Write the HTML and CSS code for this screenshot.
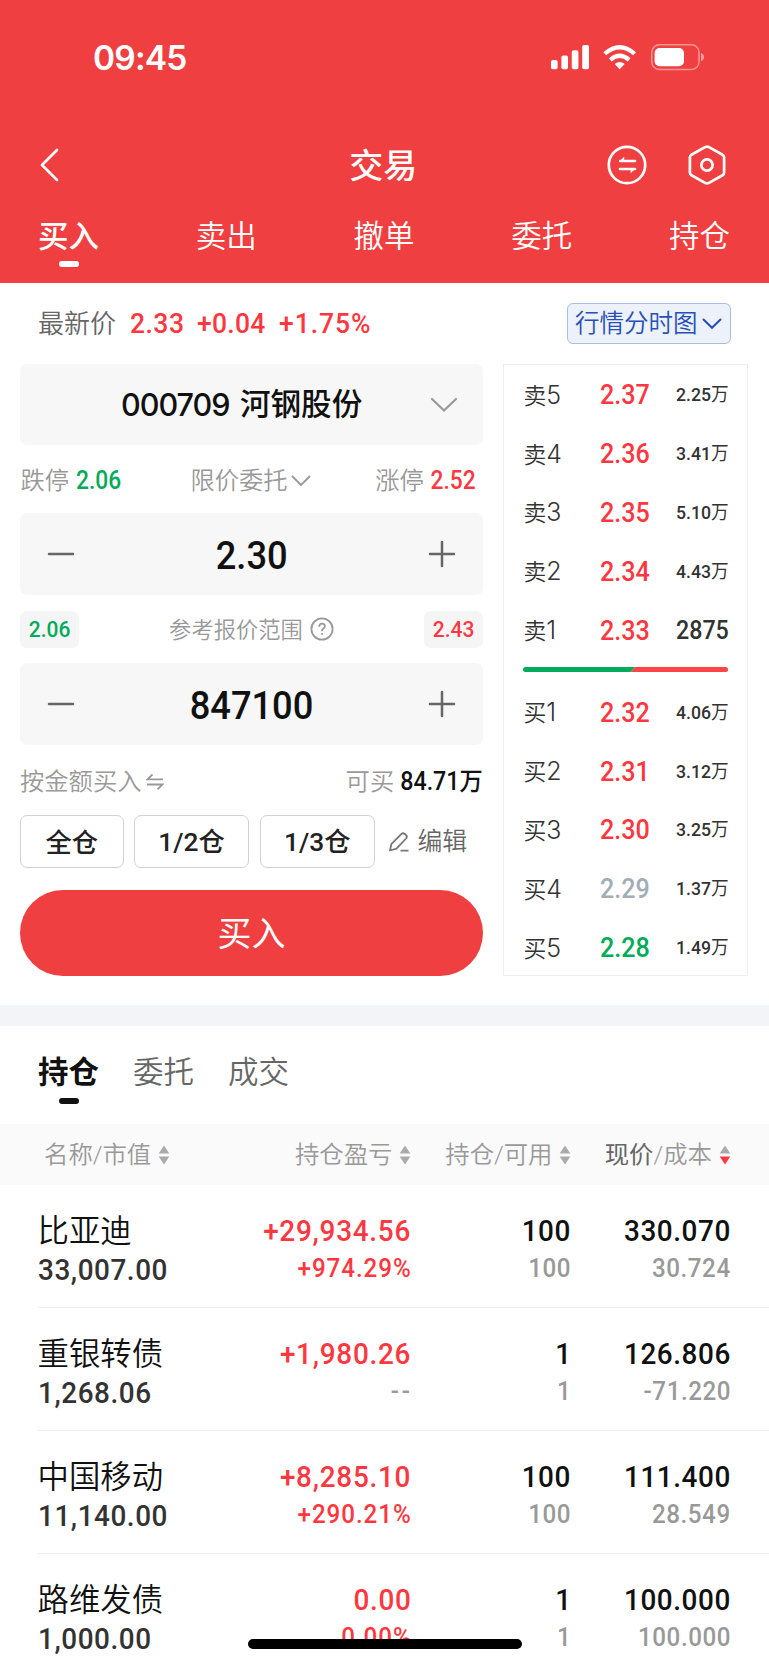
FILE: index.html
```html
<!DOCTYPE html>
<html lang="zh-CN">
<head>
<meta charset="utf-8">
<title>交易</title>
<link rel="stylesheet" href="styles.css">
</head>
<body>
<svg class="defs" width="0" height="0">
  <symbol id="sort" viewBox="0 0 12 20"><path class="up" d="M6 .6 11.300 8.600H.7Z"/><path class="down" d="M6 19.600 .7 11.600h10.600Z"/></symbol>
  <symbol id="minus" viewBox="0 0 28 28"><path d="M2 14h24"/></symbol>
  <symbol id="plus" viewBox="0 0 28 28"><path d="M2 14h24M14 2v24"/></symbol>
</svg>
<div class="screen">
  <header class="header">
    <div class="status">
      <span class="clock">09:45</span>
      <svg class="status-icons" width="156" height="30" viewBox="549 42 156 30">
        <g fill="#fff">
          <rect x="551" y="60" width="6.6" height="9.3" rx="1.8"/>
          <rect x="561.4" y="55.5" width="6.6" height="13.8" rx="1.8"/>
          <rect x="571.8" y="50.2" width="6.6" height="19.1" rx="1.8"/>
          <rect x="582.2" y="45" width="6.8" height="24.3" rx="1.8"/>
          <path d="M619.7 69.3l-5-5.2q5-4.2 10 0z"/>
        </g>
        <g fill="none" stroke="#fff" stroke-width="4.2">
          <path d="M604.8 53.8q14.9-13.2 29.8 0"/>
          <path d="M610.3 59.8q9.4-8 18.8 0"/>
        </g>
        <rect x="651.8" y="44.8" width="47.2" height="24.6" rx="7.5" fill="none" stroke="#fff" stroke-opacity=".45" stroke-width="1.5"/>
        <rect x="654.6" y="48" width="29.4" height="18.2" rx="5" fill="#fff"/>
        <path d="M701 53v8.2q3-1 3-4.1t-3-4.1z" fill="#fff" fill-opacity=".5"/>
      </svg>
    </div>
    <div class="navbar">
      <svg class="back" width="20" height="34" viewBox="0 0 20 34"><path d="M18 2 3 17l15 15"/></svg>
      <h1 class="title">交易</h1>
      <div class="nav-actions">
        <svg width="42" height="42" viewBox="0 0 42 42"><circle cx="21" cy="21" r="18.2"/><path d="M14.3 17H29M14 25h15"/><path class="solid" d="M13.2 17.6 18.2 12.8v4.8zM29.6 24.4l-5 4.8v-4.8z"/></svg>
        <svg width="42" height="42" viewBox="0 0 42 42"><path d="M19 3.1q2-1.100 4 0L36.500 10.700q1.600 1 1.600 2.800v15q0 1.800-1.600 2.800L23 38.900q-2 1.100-4 0L5.500 31.300q-1.600-1-1.600-2.800v-15q0-1.800 1.600-2.800z"/><circle cx="21" cy="21" r="5.600"/></svg>
      </div>
    </div>
    <nav class="tabs">
      <span class="tab active">买入</span><span class="tab">卖出</span><span class="tab">撤单</span><span class="tab">委托</span><span class="tab">持仓</span>
    </nav>
  </header>

  <section class="quote">
    <span class="quote-label">最新价</span>
    <span class="num q1">2.33</span><span class="num q2">+0.04</span><span class="num q3">+1.75%</span>
    <span class="chart-btn">行情分时图<svg width="20" height="12" viewBox="0 0 20 12"><path d="M1.500 1.500 10 9.800l8.500-8.300"/></svg></span>
  </section>

  <main class="trade">
    <div class="form">
      <div class="field stock"><span class="code">000709</span><span class="name">河钢股份</span><svg class="chev" width="28" height="16" viewBox="0 0 28 16"><path d="M2 2l12 11.500L26 2"/></svg></div>
      <div class="line limits">
        <span class="limit"><span class="muted">跌停</span><span class="num green">2.06</span></span>
        <span class="muted order-type">限价委托<svg width="20" height="12" viewBox="0 0 20 12"><path d="M1.500 1.500 10 10l8.500-8.500"/></svg></span>
        <span class="limit up-limit"><span class="muted">涨停</span><span class="num red">2.52</span></span>
      </div>
      <div class="field stepper"><svg width="28" height="28"><use href="#minus"/></svg><span class="num price-value">2.30</span><svg width="28" height="28"><use href="#plus"/></svg></div>
      <div class="line range">
        <span class="chip"><span class="num green">2.06</span></span>
        <span class="range-label">参考报价范围<svg width="24" height="24" viewBox="0 0 24 24"><circle cx="12" cy="12" r="10.600"/><path d="M9.200 9.700q.2-3 2.900-3 2.700 0 2.700 2.500 0 1.300-1.300 2.300-1.400 1-1.400 2.300v.5M12.100 16v1.700"/></svg></span>
        <span class="chip"><span class="num red">2.43</span></span>
      </div>
      <div class="field stepper"><svg width="28" height="28"><use href="#minus"/></svg><span class="num qty-value">847100</span><svg width="28" height="28"><use href="#plus"/></svg></div>
      <div class="line amount">
        <span class="muted by-amount">按金额买入<svg width="18" height="18" viewBox="0 0 18 18"><path d="M6.500 1.500 1.500 6.300h15.500M1 11.500h15.500l-5 4.800"/></svg></span>
        <span class="available"><span class="muted">可买</span><span class="num max">84.71<span class="wan">万</span></span></span>
      </div>
      <div class="fractions">
        <span class="frac full">全仓</span><span class="frac">1/2仓</span><span class="frac">1/3仓</span>
        <span class="edit"><svg width="20" height="20" viewBox="0 0 20 20"><path d="M1 18.500l1.300-6.300L12.500 1.900q1.500-1.300 3.300 0l1.300 1.300q1.500 1.500 0 3.300L7.500 16.700zM11.500 18.700h8"/></svg>编辑</span>
      </div>
      <div class="buy">买入</div>
    </div>
    <div class="book">
      <div class="level"><span class="side">卖<i>5</i></span><span class="num p red">2.37</span><span class="num v">2.25<b>万</b></span></div>
      <div class="level"><span class="side">卖<i>4</i></span><span class="num p red">2.36</span><span class="num v">3.41<b>万</b></span></div>
      <div class="level"><span class="side">卖<i>3</i></span><span class="num p red">2.35</span><span class="num v">5.10<b>万</b></span></div>
      <div class="level"><span class="side">卖<i>2</i></span><span class="num p red">2.34</span><span class="num v">4.43<b>万</b></span></div>
      <div class="level"><span class="side">卖<i>1</i></span><span class="num p red">2.33</span><span class="num v big">2875</span></div>
      <svg class="ratio" width="205" height="5" viewBox="0 0 205 5"><path d="M2.500 0H112l-4 5H2.500a2.500 2.500 0 0 1 0-5z" fill="#00ab59"/><path d="M112 0h90.500a2.500 2.500 0 0 1 0 5H108z" fill="#ff4549"/></svg>
      <div class="level"><span class="side">买<i>1</i></span><span class="num p red">2.32</span><span class="num v">4.06<b>万</b></span></div>
      <div class="level"><span class="side">买<i>2</i></span><span class="num p red">2.31</span><span class="num v">3.12<b>万</b></span></div>
      <div class="level"><span class="side">买<i>3</i></span><span class="num p red">2.30</span><span class="num v">3.25<b>万</b></span></div>
      <div class="level"><span class="side">买<i>4</i></span><span class="num p flat">2.29</span><span class="num v">1.37<b>万</b></span></div>
      <div class="level"><span class="side">买<i>5</i></span><span class="num p green">2.28</span><span class="num v">1.49<b>万</b></span></div>
    </div>
  </main>

  <section class="holdings">
    <nav class="subtabs"><span class="subtab active">持仓</span><span class="subtab">委托</span><span class="subtab">成交</span></nav>
    <div class="row head">
      <span class="c1">名称/市值<svg width="12" height="20"><use href="#sort"/></svg></span>
      <span class="c2">持仓盈亏<svg width="12" height="20"><use href="#sort"/></svg></span>
      <span class="c3">持仓/可用<svg width="12" height="20"><use href="#sort"/></svg></span>
      <span class="c4"><em>现价</em>/成本<svg class="desc" width="12" height="20"><use href="#sort"/></svg></span>
    </div>
    <div class="row item">
      <div class="c1"><span class="sec">比亚迪</span><span class="num val">33,007.00</span></div>
      <div class="c2 red"><span class="num main">+29,934.56</span><span class="num sub">+974.29%</span></div>
      <div class="c3"><span class="num main">100</span><span class="num sub">100</span></div>
      <div class="c4"><span class="num main">330.070</span><span class="num sub">30.724</span></div>
    </div>
    <div class="row item">
      <div class="c1"><span class="sec">重银转债</span><span class="num val">1,268.06</span></div>
      <div class="c2 red"><span class="num main">+1,980.26</span><span class="num sub none">--</span></div>
      <div class="c3"><span class="num main">1</span><span class="num sub">1</span></div>
      <div class="c4"><span class="num main">126.806</span><span class="num sub">-71.220</span></div>
    </div>
    <div class="row item">
      <div class="c1"><span class="sec">中国移动</span><span class="num val">11,140.00</span></div>
      <div class="c2 red"><span class="num main">+8,285.10</span><span class="num sub">+290.21%</span></div>
      <div class="c3"><span class="num main">100</span><span class="num sub">100</span></div>
      <div class="c4"><span class="num main">111.400</span><span class="num sub">28.549</span></div>
    </div>
    <div class="row item">
      <div class="c1"><span class="sec">路维发债</span><span class="num val">1,000.00</span></div>
      <div class="c2 red"><span class="num main">0.00</span><span class="num sub">0.00%</span></div>
      <div class="c3"><span class="num main">1</span><span class="num sub">1</span></div>
      <div class="c4"><span class="num main">100.000</span><span class="num sub">100.000</span></div>
    </div>
  </section>
  <div class="home-bar"></div>
</div>
</body>
</html>
```
FILE: styles.css
```css
* { box-sizing: border-box; }
body { margin: 0; background: #fff; font-family: Roboto, "Noto Sans CJK SC", sans-serif; color: #111; font-weight: 350; }
span, h1, svg { flex: none; }
svg { display: block; }
.defs { position: absolute; }
.screen { position: relative; width: 769px; height: 1665px; overflow: hidden; }
/* condensed figures */
.num { display: inline-block; font-weight: 500; transform: scaleX(.93); transform-origin: 0 50%; }
.red { color: #ff3740; }
.green { color: #00ab59; }
.flat { color: #a3adb8; }

/* header */
.header { height: 283px; background: #f03f41; color: #fff; }
.status { height: 114px; padding: 1px 64px 0 93px; display: flex; align-items: center; justify-content: space-between; }
.status-icons { margin-top: -1px; }
.clock { font: 600 33.500px/40px Inter, sans-serif; letter-spacing: -.8px; }
.navbar { height: 101px; padding: 0 41px 0 38.500px; display: grid; grid-template-columns: 1fr auto 1fr; align-items: center; }
.back { fill: none; stroke: #fff; stroke-width: 2.700; stroke-linecap: round; stroke-linejoin: round; }
.title { margin: 0; padding-top: 2px; font-size: 34px; line-height: 44px; font-weight: 500; }
.nav-actions { display: flex; justify-content: flex-end; gap: 38px; }
.nav-actions svg { fill: none; stroke: #fff; stroke-width: 2.700; stroke-linecap: round; }
.nav-actions .solid { fill: #fff; stroke: none; }
.tabs { height: 68px; padding: 0 39px 0 38px; display: flex; justify-content: space-between; font-size: 30.500px; line-height: 44px; }
.tab.active { font-weight: 500; }
.tab.active::after, .subtab.active::after { content: ""; display: block; width: 20px; height: 6px; margin: 2px auto 0; border-radius: 3px; background: currentColor; }

/* quote line */
.quote { height: 81px; padding: 0 38px; display: flex; align-items: center; font-size: 28.500px; color: #ff3740; line-height: 40px; }
.quote-label { font-size: 26px; color: #666; width: 91.500px; padding-top: 1px; }
.q1 { width: 67px; letter-spacing: .5px; }
.q2 { width: 82px; letter-spacing: .3px; }
.q3 { letter-spacing: 1px; }
.chart-btn { margin-left: auto; width: 164px; height: 41px; padding: 1px 8px 0 7px; display: flex; align-items: center; justify-content: space-between; border: 1px solid #a9bde8; border-radius: 6px; background: #edf1fa; color: #2550b8; font-size: 24.500px; }
.chart-btn svg { fill: none; stroke: #2550b8; stroke-width: 2; stroke-linecap: round; }

/* order form */
.trade { height: 641px; padding: 0 21.500px 0 20px; display: flex; justify-content: space-between; align-items: flex-start; }
.form { width: 463px; }
.field { height: 81px; border-radius: 7px; background: #f7f7f7; display: flex; align-items: center; }
.stock { padding: 0 25px 0 101px; font-weight: 500; font-size: 30.600px; line-height: 40px; }
.code { font-family: Inter, sans-serif; letter-spacing: -1.050px; }
.name { margin-left: 10.500px; padding-top: 1px; }
.chev { margin-left: auto; fill: none; stroke: #999; stroke-width: 2.200; stroke-linecap: round; }
.line { height: 68px; padding-top: 4px; display: flex; align-items: center; font-size: 24.300px; line-height: 36px; }
.muted { color: #999; }
.line .num { font-size: 25px; transform: scaleX(.91); }
.limit, .available { display: flex; gap: 7px; }
.line.limits { padding: 4px 7px 0 .5px; justify-content: space-between; }
.line .up-limit .num { margin-left: -4.500px; transform-origin: 100% 50%; }
.order-type { display: flex; align-items: center; }
.order-type svg { margin-left: 3px; fill: none; stroke: #999; stroke-width: 1.800; stroke-linecap: round; }
.stepper { height: 82px; padding: 0 27px; justify-content: space-between; }
.stepper svg { stroke: #666; stroke-width: 2.500; stroke-linecap: round; }
.price-value, .qty-value { padding-top: 4px; font-size: 39px; line-height: 50px; transform-origin: 50% 50%; }
.line.range { padding-top: 0; justify-content: space-between; }
.chip { width: 59px; height: 37px; border-radius: 7px; background: #f5f5f5; text-align: center; }
.line .chip .num { font-size: 22.800px; line-height: 38px; transform: scaleX(.92); transform-origin: 50% 50%; }
.range-label { display: flex; align-items: center; gap: 7px; font-size: 22.300px; color: #999; padding-top: 2px; }
.range-label svg { margin-top: -2px; fill: none; stroke: #999; stroke-width: 1.800; }
.amount { height: 70px; justify-content: space-between; }
.by-amount { display: flex; align-items: center; gap: 5px; }
.by-amount svg { fill: none; stroke: #999; stroke-width: 1.800; }
.line .max { margin-left: -7px; transform: scaleX(.93); transform-origin: 100% 50%; color: #111; }
.fractions { height: 53px; display: flex; font-size: 26.300px; line-height: 52px; }
.frac { width: 115.500px; margin-right: 10.300px; border: 1px solid #d2d2d2; border-radius: 7px; text-align: center; color: #222; font-weight: 500; }
.full { width: 103.500px; line-height: 55px; }
.edit { display: flex; align-items: center; gap: 8px; margin-left: 4px; font-size: 24.800px; line-height: 56px; color: #666; }
.edit svg { fill: none; stroke: #777; stroke-width: 1.800; stroke-linejoin: round; }
.buy { height: 86px; margin-top: 22px; border-radius: 43px; background: #f03f41; color: #fff; font-size: 34px; line-height: 88px; text-align: center; font-weight: 400; }

/* order book */
.book { width: 245px; height: 612px; padding: 1px 18px 0 20px; border: 1.500px solid #eee; }
.level { height: 58.800px; display: flex; align-items: center; line-height: 40px; color: #333; }
.side { width: 76.500px; font-size: 22.800px; padding-top: 1px; }
.side i { font: 300 25px/40px Inter, sans-serif; letter-spacing: -1px; }
.p { font-size: 27px; }
.v { margin-left: auto; font-size: 19px; transform-origin: 100% 50%; }
.v b { font-weight: 400; }
.v.big { font-size: 25px; }
.ratio { margin: 7.500px 0 11px -1px; }

/* holdings */
.holdings { border-top: 21px solid #f3f4f8; }
.subtabs { height: 98px; padding: 25px 38px 0; display: flex; gap: 34px; font-size: 30.500px; line-height: 44px; color: #666; }
.subtab.active { color: #111; font-weight: 700; }
.subtab.active::after { margin-top: 3px; }
.row { display: grid; grid-template-columns: 185px 188px 160px 159.500px; }
.row > * { display: flex; justify-content: flex-end; }
.row > .c1 { justify-content: flex-start; }
.head { height: 61px; padding-left: 38px; background: #fafafa; font-size: 24.400px; line-height: 67px; color: #999; }
.head > * { align-items: center; height: 61px; }
.head .c1 { padding-left: 6px; }
.head svg { margin-left: 6.500px; }
.up { fill: #aaa; }
.down { fill: var(--down, #aaa); }
.head em { font-style: normal; color: #666; font-weight: 400; }
.head .desc { --down: #ff3740; }
.item { height: 123px; margin-left: 38px; padding-top: 25px; border-bottom: 1px solid #eee; }
.item > * { flex-direction: column; align-items: flex-end; justify-content: flex-start; }
.item > .c1 { align-items: flex-start; }
.item .num { letter-spacing: .6px; margin-right: -.3px; transform-origin: 100% 50%; }
.item .c1 .num { transform-origin: 0 50%; }
.item .c2 .num { letter-spacing: .8px; }
.sec { margin-left: -.5px; font-size: 31.400px; line-height: 44px; }
.val { font-size: 30px; line-height: 32px; color: #333; }
.main { font-size: 30px; line-height: 42px; }
.item .c2 .sub { letter-spacing: 1px; }
.sub { font-size: 26px; line-height: 32px; }
.c3 .sub, .c4 .sub, .none { color: #999; }
.item .c2 .none { letter-spacing: 3px; margin-right: -2px; }
.home-bar { position: absolute; left: 248px; top: 1639px; width: 274px; height: 10px; border-radius: 5px; background: #000; }
```
